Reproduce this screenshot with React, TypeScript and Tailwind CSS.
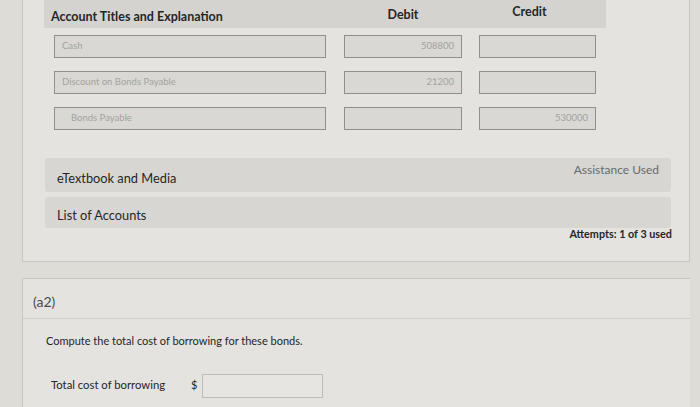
import React from 'react';

const rows = [
  { account: 'Cash', debit: '508800', credit: '', indent: false },
  { account: 'Discount on Bonds Payable', debit: '21200', credit: '', indent: false },
  { account: 'Bonds Payable', debit: '', credit: '530000', indent: true },
];

const Field: React.FC<{ value: string; align?: 'left' | 'right'; width: string; indent?: boolean }> = ({
  value,
  align = 'left',
  width,
  indent,
}) => (
  <div
    className={`${width} h-[23px] bg-[#d9d8d4] border border-[#8f8f8c] flex items-center pr-[7px] text-[9.5px] text-[#a3a3a0] ${
      align === 'right' ? 'justify-end' : 'justify-start'
    } ${indent ? 'pl-[16px]' : 'pl-[7px]'}`}
  >
    {value}
  </div>
);

export default function App() {
  return (
    <div className="w-[700px] h-[407px] overflow-hidden bg-[#dddcd7] font-['Lato','Liberation_Sans',sans-serif] text-[#262626]">
      {/* journal entry card */}
      <div className="ml-[22px] w-[668px] h-[262px] bg-[#e4e3df] border-x border-b border-[#c8c7c2]">
        <div className="ml-[21px] w-[562px]">
          <div className="h-[28px] bg-[#d4d3cf] flex items-center text-[12.5px] font-bold">
            <div className="w-[300px] pl-[7px] pt-[6px]">Account Titles and Explanation</div>
            <div className="w-[118px] text-center pt-[2px]">Debit</div>
            <div className="w-[135px] text-center pb-[4px]">Credit</div>
          </div>
          <div className="flex flex-col gap-[13px] pt-[7px] pl-[10px]">
            {rows.map((r) => (
              <div key={r.account} className="flex items-center">
                <Field value={r.account} width="w-[272px]" indent={r.indent} />
                <div className="w-[18px]" />
                <Field value={r.debit} align="right" width="w-[118px]" />
                <div className="w-[17px]" />
                <Field value={r.credit} align="right" width="w-[117px]" />
              </div>
            ))}
          </div>
        </div>

        <div className="ml-[22px] mr-[18px] mt-[28px] flex flex-col gap-[5px]">
          <div className="h-[34px] bg-[#d7d6d2] rounded-[3px] flex items-center justify-between px-[12px]">
            <span className="text-[12.8px] pt-[8px]">eTextbook and Media</span>
            <span className="text-[12px] text-[#6a6a68] pb-[10px]">Assistance Used</span>
          </div>
          <div className="h-[31px] bg-[#d7d6d2] rounded-[3px] flex items-center px-[12px]">
            <span className="text-[12.8px] pt-[6px]">List of Accounts</span>
          </div>
        </div>
        <div className="mr-[17px] mt-[-2px] text-right text-[10.8px] font-bold">Attempts: 1 of 3 used</div>
      </div>

      {/* part a2 */}
      <div className="mt-[16px] ml-[22px] w-[668px] h-[140px] bg-[#e4e3df] border-l border-t border-[#c8c7c2]">
        <div className="h-[40px] border-b border-[#cfcec9] flex items-center pl-[10px]">
          <span className="text-[14px] text-[#4a4a55] pt-[5px]">(a2)</span>
        </div>
        <div className="pl-[23px] pt-[14px] text-[11px]">Compute the total cost of borrowing for these bonds.</div>
        <div className="flex items-center pl-[28px] mt-[24px]">
          <span className="text-[11.3px] w-[140px]">Total cost of borrowing</span>
          <span className="text-[11px] w-[11px]">$</span>
          <div className="w-[121px] h-[24px] bg-[#e6e5e1] border border-[#bdbcb8]" />
        </div>
      </div>
    </div>
  );
}
